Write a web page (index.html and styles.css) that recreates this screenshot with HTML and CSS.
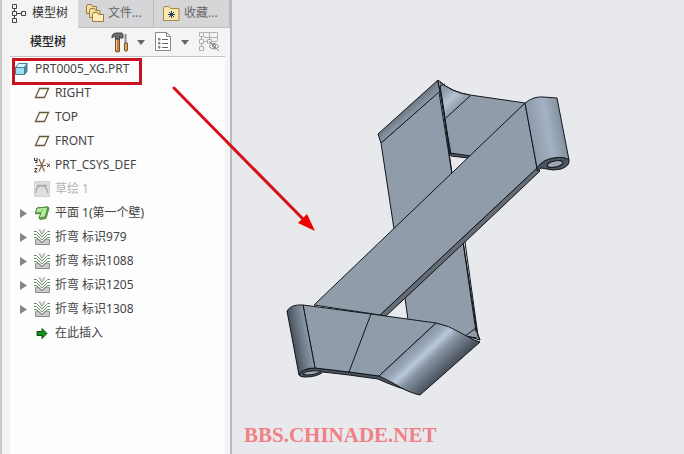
FILE: index.html
```html
<!DOCTYPE html>
<html lang="zh-CN">
<head>
    <meta charset="UTF-8">
    <meta name="viewport" content="width=device-width, initial-scale=1.0">
    <title>模型树</title>
    <link rel="stylesheet" href="styles.css">
</head>
<body>
    <!-- Shared icons -->
    <svg class="symbols" aria-hidden="true">
        <symbol id="plane" viewBox="0 0 16 16">
            <path d="M5.500 3.500H14.500L10.500 12.500H1.500Z" fill="none" stroke="#665a3a" stroke-width="1.300"/>
        </symbol>
        <symbol id="bend" viewBox="0 0 16 16">
            <path d="M1.500 15.500V10.500L4 10L8 13.500L12 10L15.500 10.500V15.500Z" fill="#c9c9c9" stroke="#8c8c8c"/>
            <path d="M5 .5L8 5.500L11 .5" fill="#ddd" stroke="#999"/>
            <path d="M0 2.500H2.500L8 8L13.500 2.500H16M0 5.500H2.500L8 11L13.500 5.500H16M0 8.500H2.500L8 13.500L13.500 8.500H16" fill="none" stroke="#5f9160"/>
        </symbol>
        <symbol id="caret" viewBox="0 0 8 5">
            <path d="M0 0H8L4 5Z" fill="#666"/>
        </symbol>
        <symbol id="expand" viewBox="0 0 7 9">
            <path d="M0 0L7 4.500L0 9Z" fill="#858585"/>
        </symbol>
    </svg>

    <div class="app">
        <aside class="sidebar">
            <div class="tabs" role="tablist">
                <button class="tab active" role="tab" aria-selected="true">
                    <svg class="tab-icon" viewBox="0 0 18 20" fill="none" stroke="#444">
                        <path d="M4.500 6V8M4.500 13V15M7 10.500H11"/>
                        <path d="M2.500 1.500H6.500V5.500H2.500ZM2.500 8.500H6.500V12.500H2.500ZM2.500 15.500H6.500V19.500H2.500ZM11.500 8.500H15.500V12.500H11.500Z"/>
                    </svg>
                    <span>模型树</span>
                </button>
                <button class="tab" role="tab">
                    <svg class="tab-icon" viewBox="0 0 18 20" fill="#f5dfa0" stroke="#9b7c3c">
                        <path d="M.5 3.500V10.500H10.500V3.500H6.500L5.500 1.500H1.500Z"/>
                        <path d="M3.500 7.500V14.500H14V7.500H9.500L8.500 5.500H4.500Z"/>
                        <path d="M6.500 11.500V18.500H17.500V11.500H12.500L11.500 9.500H7.500Z" fill="#fdecb8"/>
                    </svg>
                    <span>文件...</span>
                </button>
                <button class="tab" role="tab">
                    <svg class="tab-icon" viewBox="0 0 18 20" fill="none">
                        <path d="M1.500 5.500V17.500H17V5.500H8.500L7 3.500H2.500Z" fill="#fbe7ae" stroke="#a3884d"/>
                        <path d="M9.500 8V15M6 11.500H13M7 9L12 14M12 9L7 14" stroke="#20455c"/>
                    </svg>
                    <span>收藏...</span>
                </button>
            </div>

            <div class="toolbar">
                <h1 class="title">模型树</h1>
                <button class="tool" aria-label="设置">
                    <svg class="tool-icon" viewBox="0 0 18 22">
                        <path d="M4.500 8H8.500V20.500Q6.500 21.500 4.500 20.500Z" fill="#bd8748" stroke="#765129"/>
                        <path d="M5.500 9V19" stroke="#efc88a"/>
                        <path d="M1 5Q2 2 5 2H11L12 4V7H9L8.500 5.500V8H4.500V5.500Q2 5.500 1 7Z" fill="#6c7074" stroke="#43474a"/>
                        <path d="M14.500 3V12" stroke="#8a8d90" stroke-width="2"/>
                        <path d="M13.500 12H16.500V19.500Q15 21 13.500 19.500Z" fill="#d9a95e" stroke="#765129"/>
                    </svg>
                    <svg class="caret"><use href="#caret"/></svg>
                </button>
                <button class="tool" aria-label="显示">
                    <svg class="tool-icon" viewBox="0 0 18 22" fill="none" stroke="#888">
                        <path d="M.5 1.500H11.500L15.500 5.500V19.500H.5Z" fill="#fff"/>
                        <path d="M11.500 1.500V5.500H15.500"/>
                        <path d="M7 8.500H13M7 12.500H13M7 16.500H13" stroke="#666"/>
                        <path d="M3.500 7.500H5V9H3.500ZM3.500 11.500H5V13H3.500ZM3.500 15.500H5V17H3.500Z" stroke="#777"/>
                    </svg>
                    <svg class="caret"><use href="#caret"/></svg>
                </button>
                <button class="tool" aria-label="隐藏" disabled>
                    <svg class="tool-icon wide" viewBox="0 0 22 22" fill="none" stroke="#b0b0b0">
                        <path d="M.5 1.500H4.500V5.500H.5ZM.5 8.500H4.500V12.500H.5ZM.5 15.500H4.500V19.500H.5ZM8.500 8.500H12.500V12.500H8.500Z"/>
                        <path d="M2.500 6V8M2.500 13V15M5 10.500H8M5 1.500H18.500V10M5 6.500H18M10.500 2V8M13 10.500H18"/>
                        <path d="M10 15.500Q15 9.500 20 15.500Q15 20.500 10 15.500ZM10 10L20 20" stroke="#888"/>
                        <circle cx="15" cy="15" r="1.500" stroke="#888"/>
                    </svg>
                </button>
            </div>

            <ul class="tree">
                <li class="node root">
                    <svg class="icon" viewBox="0 0 16 16" stroke="#4c7d93" stroke-linejoin="round">
                        <path d="M1.500 6.500L4.500 2.500H13L10.500 6.500Z" fill="#d8f6ff"/>
                        <path d="M1.500 6.500H10.500V13.500H1.500Z" fill="#9be0f5"/>
                        <path d="M10.500 6.500L13 2.500V10.500L10.500 13.500Z" fill="#438faf"/>
                    </svg>
                    <span>PRT0005_XG.PRT</span>
                </li>
                <li class="node"><span class="expander"></span><svg class="icon"><use href="#plane"/></svg><span>RIGHT</span></li>
                <li class="node"><span class="expander"></span><svg class="icon"><use href="#plane"/></svg><span>TOP</span></li>
                <li class="node"><span class="expander"></span><svg class="icon"><use href="#plane"/></svg><span>FRONT</span></li>
                <li class="node">
                    <span class="expander"></span>
                    <svg class="icon" viewBox="0 0 16 16" fill="none" stroke="#806342">
                        <path d="M2 8.500H12M5 2L10.500 14.500M10.500 2L5 14.500" stroke-width="1.200"/>
                        <path d="M.5 1V3.500H3V1M3 3.500V5.500H1M.5 11.500H3L.5 15H3.500M13 6.500L16 10M16 6.500L13 10" stroke="#333"/>
                    </svg>
                    <span>PRT_CSYS_DEF</span>
                </li>
                <li class="node muted">
                    <span class="expander"></span>
                    <svg class="icon" viewBox="0 0 16 16" fill="none">
                        <path d="M.5 .5H15.500V15.500H.5Z" fill="#dedede" stroke="#c4c4c4" stroke-dasharray="2 1"/>
                        <path d="M2 12Q2 4.500 8 4.500Q12 4.500 14 12M3 4.500H13" stroke="#aaa" stroke-width="1.300"/>
                    </svg>
                    <span>草绘 1</span>
                </li>
                <li class="node">
                    <button class="expander" aria-label="展开"><svg><use href="#expand"/></svg></button>
                    <svg class="icon" viewBox="0 0 16 16" stroke="#4c8a3c" stroke-linejoin="round">
                        <path d="M3 3L14 2L15 3L12 13.500L6 14.500L5 13L7 8.500L1.500 9Z" fill="#6db257"/>
                        <path d="M3 3L14 2L11 12L5 13L7 7.500L1.500 8Z" fill="#b5eba0"/>
                        <path d="M7 7.500L8.500 4" stroke="#75bd61"/>
                    </svg>
                    <span>平面 1(第一个壁)</span>
                </li>
                <li class="node"><button class="expander" aria-label="展开"><svg><use href="#expand"/></svg></button><svg class="icon"><use href="#bend"/></svg><span>折弯 标识979</span></li>
                <li class="node"><button class="expander" aria-label="展开"><svg><use href="#expand"/></svg></button><svg class="icon"><use href="#bend"/></svg><span>折弯 标识1088</span></li>
                <li class="node"><button class="expander" aria-label="展开"><svg><use href="#expand"/></svg></button><svg class="icon"><use href="#bend"/></svg><span>折弯 标识1205</span></li>
                <li class="node"><button class="expander" aria-label="展开"><svg><use href="#expand"/></svg></button><svg class="icon"><use href="#bend"/></svg><span>折弯 标识1308</span></li>
                <li class="node">
                    <span class="expander"></span>
                    <svg class="icon" viewBox="0 0 16 16">
                        <path d="M3 6.500H8V3.500L13 8.500L8 13.500V10.500H3Z" fill="#169016" stroke="#0b4d0b"/>
                    </svg>
                    <span>在此插入</span>
                </li>
            </ul>
        </aside>

        <main class="viewport">
            <svg class="model" viewBox="232 0 452 454" preserveAspectRatio="xMinYMin meet" role="img" aria-label="PRT0005_XG">
                <defs>
                    <linearGradient id="rollRight" gradientUnits="userSpaceOnUse" x1="530" y1="135" x2="564" y2="129">
                        <stop offset="0" stop-color="#8e9aab"/><stop offset=".55" stop-color="#a3b1c3"/><stop offset="1" stop-color="#828f9e"/>
                    </linearGradient>
                    <linearGradient id="rollLeft" gradientUnits="userSpaceOnUse" x1="293" y1="341" x2="310" y2="338">
                        <stop offset="0" stop-color="#4a525d"/><stop offset=".5" stop-color="#707b89"/><stop offset="1" stop-color="#919cab"/>
                    </linearGradient>
                    <linearGradient id="bendFront" gradientUnits="userSpaceOnUse" x1="407" y1="350" x2="436" y2="381">
                        <stop offset="0" stop-color="#8995a5"/><stop offset=".2" stop-color="#9aa8ba"/><stop offset=".36" stop-color="#b9c8dc"/><stop offset=".55" stop-color="#8894a4"/><stop offset="1" stop-color="#48515c"/>
                    </linearGradient>
                    <linearGradient id="bendTop" gradientUnits="userSpaceOnUse" x1="443" y1="92" x2="457" y2="107">
                        <stop offset="0" stop-color="#8f9bab"/><stop offset=".5" stop-color="#b6c2d2"/><stop offset="1" stop-color="#919cab"/>
                    </linearGradient>
                    <linearGradient id="bendBack" gradientUnits="userSpaceOnUse" x1="405" y1="109" x2="412" y2="117">
                        <stop offset="0" stop-color="#6b7581"/><stop offset="1" stop-color="#929dac"/>
                    </linearGradient>
                </defs>
                <g class="edges">
                    <!-- rear faces -->
                    <path class="face" d="M440 82Q452 92 470 95L525 103L470 158L450 154Z"/>
                    <path class="bare" d="M440 83Q452 92 470 95L446 118Z" fill="url(#bendTop)"/>
                    <path class="line" d="M438 80Q452 93 470 95M470 96L446 118"/>
                    <path class="side" d="M450 153L471 156L468 158L451 156Z"/>
                    <path class="face" d="M381 143L439 92L452 174L394 229Z"/>
                    <path class="bare" d="M378 134L438 80L440 92L381 143Z" fill="url(#bendBack)"/>
                    <path class="line" d="M381 143L378 134L438 80L440 92M381 143L439 92"/>
                    <path class="line" d="M438 81L451 154M440 86L452 174M440 86L445 84"/>
                    <path class="face" d="M405 298L463 241L477 332L480 340L408 320Z"/>
                    <path class="line" d="M463 242L476 332M465 242L478 336L480 340M465 336L476 328M465 336L477 338"/>

                    <!-- long diagonal strip -->
                    <path class="rim" d="M537 168L540 171L466 241L386 316L380 315Z"/>
                    <path class="face" d="M525 103L537 168L380 315L314 305Z"/>
                    <path class="side" d="M537 168Q542 160 553 158Q565 156 569 160Q570 166 561 169Q553 171 547 169L541 168L537 171Z"/>
                    <ellipse cx="555" cy="164" rx="8" ry="3" transform="rotate(-12 555 164)" fill="#9da7b3"/>
                    <path d="M525 103Q534 96 543 97L557 98L569 160Q564 156 553 158Q542 160 537 168Z" fill="url(#rollRight)"/>

                    <!-- front piece -->
                    <path class="side" d="M299 375Q302 369 315 368L349 372L379 376Q395 382 420 394Q395 387 378 379L349 375L323 372Q317 377 305 377Q300 377 299 375Z"/>
                    <path d="M303 374Q306 370 321 371Q316 375 306 375Z" fill="#a1aab6"/>
                    <path class="face" d="M303 305L371 314L436 323L379 376L349 372L315 368Z"/>
                    <path d="M287 311Q291 304 303 305L315 368Q302 368 299 375Z" fill="url(#rollLeft)"/>
                    <path d="M436 323Q448 325 461 333L474 340L480 342L420 395Q409 393 393 383L379 376Z" fill="url(#bendFront)"/>
                    <path class="line" d="M371 314L349 372"/>
                </g>
            </svg>
            <p class="watermark">BBS.CHINADE.NET</p>
        </main>

        <svg class="pointer" viewBox="0 0 144 146" aria-hidden="true">
            <path d="M2 2L131 133" stroke="#d8101a" stroke-width="3" stroke-linecap="round"/>
            <path d="M143 145L126 137L135 128Z" fill="#f00000"/>
        </svg>
    </div>
</body>
</html>
```
FILE: styles.css
```css
*,
*::after {
    box-sizing: border-box;
}

body {
    margin: 0;
    background: #e8e9ed;
    color: #444;
    font: 12px/24px "Noto Sans", "Noto Sans CJK SC", sans-serif;
}

button {
    border: 0;
    padding: 0;
    background: none;
    color: inherit;
    font: inherit;
}

.symbols {
    position: absolute;
    width: 0;
    height: 0;
}

.app {
    position: relative;
    display: flex;
    min-height: 100vh;
    overflow: hidden;
}

.sidebar {
    flex: 0 0 232px;
    background: #f4f4f5;
    border-left: 2px solid #c8c8c8;
    border-right: 2px solid #bababc;
    display: flex;
    flex-direction: column;
}

/* Tabs */
.tabs {
    display: flex;
    height: 28px;
}

.tab {
    flex: 1;
    display: flex;
    align-items: center;
    gap: 4px;
    padding: 0 0 2px 8px;
    background: #d6d6d8;
    border-right: 1px solid #bbb;
    border-bottom: 1px solid #c3c3c3;
    color: #666;
    white-space: nowrap;
}

.tab.active {
    background: #f4f4f5;
    border-color: transparent;
    color: #333;
}

.tab-icon {
    width: 18px;
    height: 20px;
}

/* Toolbar */
.toolbar {
    display: flex;
    align-items: center;
    gap: 10px;
    height: 29px;
    margin: 0 5px 0 8px;
    padding: 0 4px 0 20px;
    border-bottom: 1px solid #c4c4c4;
}

.title {
    flex: 1;
    margin: 0;
    font-size: 12px;
    font-weight: 500;
    color: #222;
}

.tool {
    display: flex;
    align-items: center;
    gap: 8px;
}

.tool-icon {
    width: 18px;
    height: 22px;
}

.tool-icon.wide {
    width: 22px;
}

.caret {
    width: 8px;
    height: 5px;
}

/* Tree */
.tree {
    flex: 1;
    margin: 0 5px 0 8px;
    padding: 0;
    background: #fdfdfd;
    list-style: none;
}

.node {
    display: flex;
    align-items: center;
    height: 24px;
    padding-left: 10px;
    white-space: nowrap;
}

.root {
    position: relative;
    padding-left: 4px;
}

.root::after {
    content: "";
    position: absolute;
    top: 1px;
    left: 2px;
    width: 130px;
    height: 27px;
    border: 3px solid #c8141e;
}

.muted {
    color: #b4b4b4;
}

.expander {
    display: flex;
    width: 14px;
}

.expander svg {
    width: 7px;
    height: 9px;
}

.icon {
    width: 16px;
    height: 16px;
    margin-right: 5px;
}

/* Model view */
.viewport {
    position: relative;
    flex: 1;
    min-width: 0;
}

.model {
    display: block;
    width: 100%;
}

.edges {
    stroke: #12161c;
    stroke-linejoin: round;
}

.face {
    fill: #919cab;
}

.side {
    fill: #4c545e;
}

.rim {
    fill: #666c75;
}

.line {
    fill: none;
}

.bare {
    stroke: none;
}

.watermark {
    position: absolute;
    left: 12px;
    bottom: 7px;
    margin: 0;
    color: #f08084;
    font: bold 21px/24px "Liberation Serif", serif;
}

.pointer {
    position: absolute;
    top: 86px;
    left: 172px;
    width: 144px;
    height: 146px;
}
```
